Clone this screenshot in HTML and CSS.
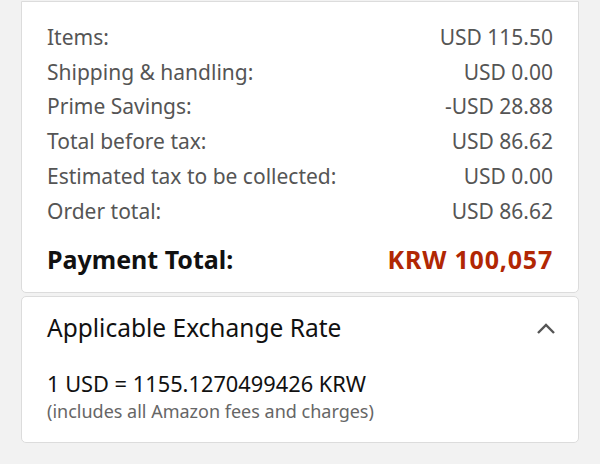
FILE: index.html
```html
<!DOCTYPE html>
<html lang="en">
<head>
  <meta charset="UTF-8" />
  <meta name="viewport" content="width=device-width, initial-scale=1.0"/>
  <title>Order Summary</title>
  <link rel="stylesheet" href="styles.css">
</head>
<body>
  <div class="page">
    <section class="box summary">
      <div class="row"><span>Items:</span><span>USD 115.50</span></div>
      <div class="row"><span>Shipping &amp; handling:</span><span>USD 0.00</span></div>
      <div class="row"><span>Prime Savings:</span><span>-USD 28.88</span></div>
      <div class="row"><span>Total before tax:</span><span>USD 86.62</span></div>
      <div class="row"><span>Estimated tax to be collected:</span><span>USD 0.00</span></div>
      <div class="row"><span>Order total:</span><span>USD 86.62</span></div>
      <div class="row grand"><span>Payment Total:</span><span class="price">KRW 100,057</span></div>
    </section>

    <section class="box rate">
      <div class="rate-head">
        <h2>Applicable Exchange Rate</h2>
        <svg class="chevron" width="20" height="14" viewBox="0 0 20 14">
          <path d="M2 11 L10 3 L18 11" fill="none" stroke="#555" stroke-width="2.4" />
        </svg>
      </div>
      <p class="rate-value">1 USD = 1155.1270499426 KRW</p>
      <p class="rate-note">(includes all Amazon fees and charges)</p>
    </section>
  </div>
</body>
</html>
```

FILE: styles.css
```css
body {
  margin: 0;
  background: #f2f2f2;
  font-family: 'Noto Sans', 'Open Sans', sans-serif;
  color: #111;
}
.page {
  padding: 1px 21px 0 21px;
  display: flex;
  flex-direction: column;
  gap: 3px;
}
.box {
  background: #fff;
  border: 1px solid #dcdcdc;
  border-radius: 5px;
}
.summary {
  border-top-left-radius: 0;
  border-top-right-radius: 0;
  padding: 18px 25px 15px 25px;
}
.row {
  display: flex;
  justify-content: space-between;
  font-size: 21px;
  line-height: 34.7px;
  color: #555;
}
.row.grand {
  margin-top: 14px;
  font-size: 25px;
  font-weight: bold;
  color: #111;
}
.price {
  color: #b12704;
  letter-spacing: 0.8px;
}
.rate {
  padding: 0 25px 18px 25px;
}
.rate-head {
  display: flex;
  justify-content: space-between;
  align-items: center;
  height: 62px;
}
.rate-head h2 {
  margin: 0;
  font-size: 24.5px;
  font-weight: normal;
  color: #111;
}
.chevron {
  margin-right: -3px;
  margin-top: 2px;
}
.rate-value {
  margin: 11px 0 0 0;
  font-size: 21.8px;
  line-height: 28px;
}
.rate-note {
  margin: 0;
  font-size: 18px;
  line-height: 26px;
  color: #666;
}
```
